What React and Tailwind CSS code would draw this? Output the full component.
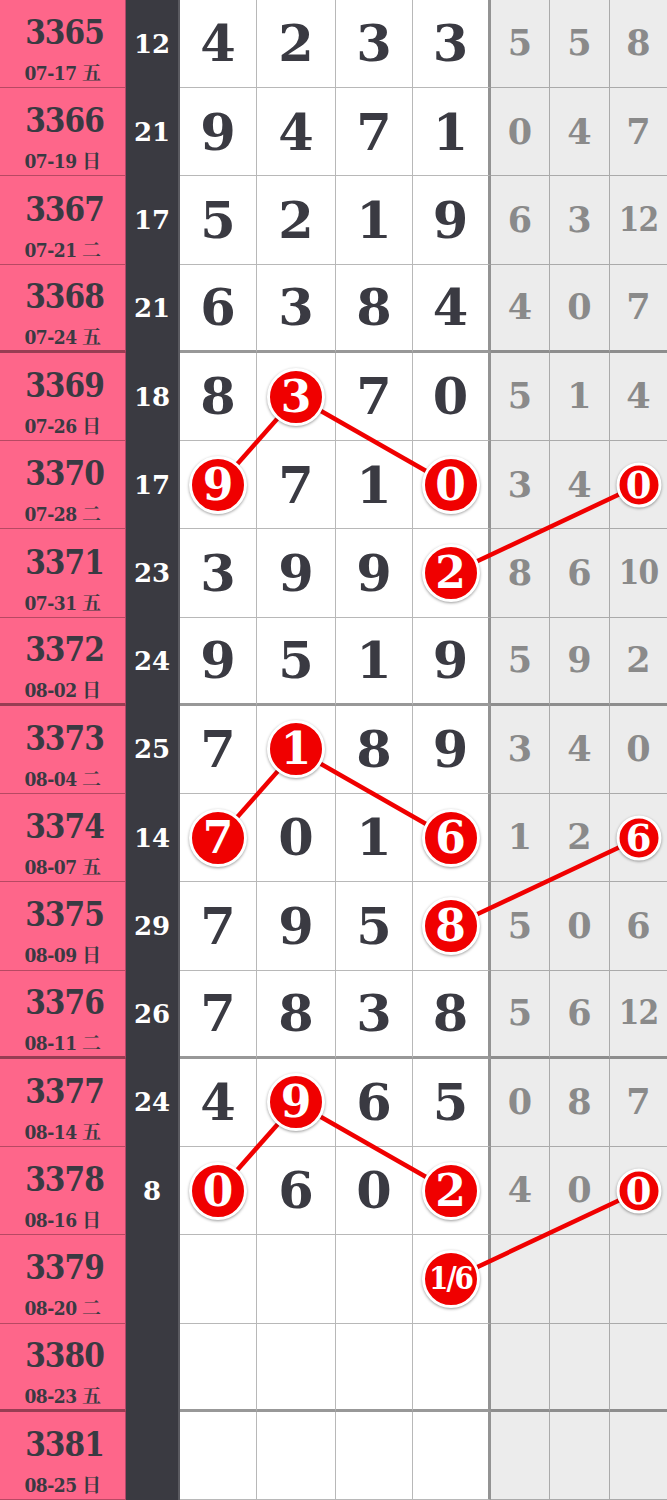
import React from 'react';

const SERIF = { fontFamily: '"DejaVu Serif", "Liberation Serif", "Noto Serif CJK SC", "Noto Sans CJK SC", serif' };

const ROW_H = 1500 / 17;

// main / gray cells: plain string, or { c } for a circled number
const rows = [
    { no: '3365', date: '07-17', wd: '五', sum: '12', main: ['4', '2', '3', '3'], gray: ['5', '5', '8'] },
    { no: '3366', date: '07-19', wd: '日', sum: '21', main: ['9', '4', '7', '1'], gray: ['0', '4', '7'] },
    { no: '3367', date: '07-21', wd: '二', sum: '17', main: ['5', '2', '1', '9'], gray: ['6', '3', '12'] },
    { no: '3368', date: '07-24', wd: '五', sum: '21', main: ['6', '3', '8', '4'], gray: ['4', '0', '7'] },
    { no: '3369', date: '07-26', wd: '日', sum: '18', main: ['8', { c: '3' }, '7', '0'], gray: ['5', '1', '4'] },
    { no: '3370', date: '07-28', wd: '二', sum: '17', main: [{ c: '9' }, '7', '1', { c: '0' }], gray: ['3', '4', { c: '0' }] },
    { no: '3371', date: '07-31', wd: '五', sum: '23', main: ['3', '9', '9', { c: '2' }], gray: ['8', '6', '10'] },
    { no: '3372', date: '08-02', wd: '日', sum: '24', main: ['9', '5', '1', '9'], gray: ['5', '9', '2'] },
    { no: '3373', date: '08-04', wd: '二', sum: '25', main: ['7', { c: '1' }, '8', '9'], gray: ['3', '4', '0'] },
    { no: '3374', date: '08-07', wd: '五', sum: '14', main: [{ c: '7' }, '0', '1', { c: '6' }], gray: ['1', '2', { c: '6' }] },
    { no: '3375', date: '08-09', wd: '日', sum: '29', main: ['7', '9', '5', { c: '8' }], gray: ['5', '0', '6'] },
    { no: '3376', date: '08-11', wd: '二', sum: '26', main: ['7', '8', '3', '8'], gray: ['5', '6', '12'] },
    { no: '3377', date: '08-14', wd: '五', sum: '24', main: ['4', { c: '9' }, '6', '5'], gray: ['0', '8', '7'] },
    { no: '3378', date: '08-16', wd: '日', sum: '8', main: [{ c: '0' }, '6', '0', { c: '2' }], gray: ['4', '0', { c: '0' }] },
    { no: '3379', date: '08-20', wd: '二', sum: '', main: ['', '', '', { c: '1/6' }], gray: ['', '', ''] },
    { no: '3380', date: '08-23', wd: '五', sum: '', main: ['', '', '', ''], gray: ['', '', ''] },
    { no: '3381', date: '08-25', wd: '日', sum: '', main: ['', '', '', ''], gray: ['', '', ''] },
];

const mainWidths = ['w-[77px]', 'w-[79px]', 'w-[77px]', 'w-[78px]'];
const grayWidths = ['w-[59px]', 'w-[60px]', 'w-[57px]'];

// centres of the circled cells, used for the connecting lines
const cy = (i) => (i + 0.5) * ROW_H;
const X1 = 218.5, X2 = 296.5, X4 = 451, XG = 638.5;
const lines = [
    [X1, cy(5), X2, cy(4)], [X2, cy(4), X4, cy(5)], [XG, cy(5), X4, cy(6)],
    [X1, cy(9), X2, cy(8)], [X2, cy(8), X4, cy(9)], [XG, cy(9), X4, cy(10)],
    [X1, cy(13), X2, cy(12)], [X2, cy(12), X4, cy(13)], [XG, cy(13), X4, cy(14)],
];

const Ball = ({ value, small }) => {
    const long = value.length > 1;
    let size = 'text-[44px]';
    if (small) size = 'text-[37px]';
    if (long) size = 'text-[31px] tracking-[-2px] [font-stretch:condensed]';
    return (
        <div
            className={`absolute left-1/2 top-1/2 -translate-x-1/2 -translate-y-1/2 z-20 flex items-center justify-center rounded-full bg-[#f00000] border-[3px] border-white shadow-[0_1px_3px_rgba(0,0,0,0.4)] text-white font-bold
        ${small ? 'w-[45px] h-[45px]' : 'w-[58px] h-[58px]'} ${size}`}
        >
            <span className="leading-none">{value}</span>
        </div>
    );
};

const App = () => {
    return (
        <div className="relative w-[667px] h-[1500px] overflow-hidden bg-white" style={SERIF}>
            <div className="grid grid-rows-[repeat(17,minmax(0,1fr))] h-full">
                {rows.map((row, i) => {
                    const thick = (i + 1) % 4 === 0;
                    const rowBorder = thick
                        ? 'border-b-[3px] border-b-[rgba(0,0,0,0.4)]'
                        : 'border-b border-b-[rgba(0,0,0,0.28)]';
                    return (
                        <div key={row.no} className="flex min-h-0">
                            <div
                                className={`w-[126px] shrink-0 bg-[#fe668a] border-r border-r-[#b04868] ${rowBorder} pt-[12px] flex flex-col items-center justify-center text-[#3a3a42] [font-stretch:condensed]`}
                            >
                                <div className="text-[33px] leading-none font-semibold tracking-[-1px] ml-1">{row.no}</div>
                                <div className="text-[19px] leading-none font-bold mt-[15px] tracking-[-0.5px]">
                                    {row.date} {row.wd}
                                </div>
                            </div>
                            <div className="w-[54px] shrink-0 bg-[#3a3a41] border-r-2 border-r-[#5a5a60] flex items-center justify-center text-white text-[26px] font-bold">
                                {row.sum}
                            </div>
                            {row.main.map((v, j) => (
                                <div
                                    key={j}
                                    className={`${mainWidths[j]} shrink-0 relative flex items-center justify-center ${rowBorder}
                    ${j === 3 ? 'border-r-[3px] border-r-[rgba(0,0,0,0.42)]' : 'border-r border-r-[rgba(0,0,0,0.28)]'}
                    text-[51px] font-bold text-[#3a3a42]`}
                                >
                                    {typeof v === 'object' ? <Ball value={v.c} /> : v}
                                </div>
                            ))}
                            {row.gray.map((v, j) => (
                                <div
                                    key={j}
                                    className={`${grayWidths[j]} shrink-0 relative flex items-center justify-center bg-[#ececec] ${rowBorder}
                    ${j < 2 ? 'border-r border-r-[rgba(0,0,0,0.28)]' : ''}
                    font-bold text-[#8a8a8a] ${v.length > 1 ? 'tracking-[-1px] text-[33px] [font-stretch:condensed]' : 'text-[35px]'}`}
                                >
                                    {typeof v === 'object' ? <Ball value={v.c} small /> : v}
                                </div>
                            ))}
                        </div>
                    );
                })}
            </div>
            <svg className="absolute inset-0 z-10 pointer-events-none" width="667" height="1500" viewBox="0 0 667 1500">
                {lines.map(([x1, y1, x2, y2], k) => (
                    <line key={k} x1={x1} y1={y1} x2={x2} y2={y2} stroke="#f00000" strokeWidth="4.5" />
                ))}
            </svg>
        </div>
    );
};

export default App;
